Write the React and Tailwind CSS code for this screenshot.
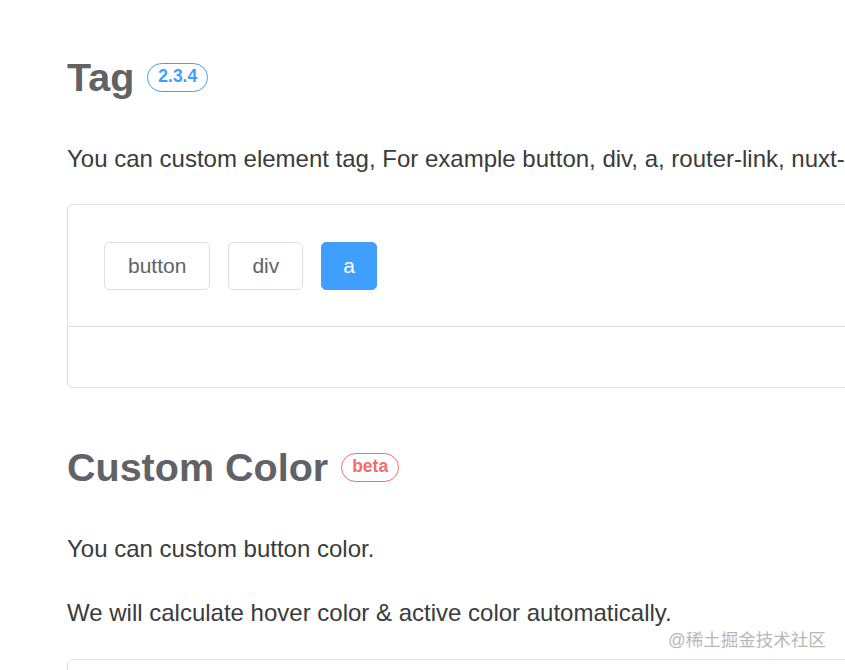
import React from "react";

const Badge = ({ children, tone }) => (
  <span
    className={`ml-[13px] inline-flex h-[29px] items-center rounded-full border px-[10px] text-[17.5px] font-bold leading-none ${
      tone === "red" ? "border-[#f56c6c] text-[#f56c6c]" : "border-[#409eff] text-[#409eff]"
    }`}
  >
    {children}
  </span>
);

const DemoButton = ({ children, primary }) => (
  <div
    className={`flex h-[48px] items-center rounded-[5px] border text-[21px] ${
      primary
        ? "border-[#409eff] bg-[#409eff] px-[21px] text-white"
        : "border-[#dcdfe6] bg-white px-[23px] text-[#606266]"
    }`}
  >
    {children}
  </div>
);

export default function App() {
  return (
    <div
      className="relative h-[670px] w-[845px] overflow-hidden bg-white"
      style={{ fontFamily: '"Liberation Sans", Arial, sans-serif' }}
    >
      <div className="w-[1200px] pl-[67px] pt-[53px] text-[#303133]">
        {/* Tag section */}
        <h2 className="flex items-center text-[39.5px] font-bold leading-[48px] text-[#606266]">
          Tag
          <Badge>2.3.4</Badge>
        </h2>
        <p className="mt-[40px] text-[24px] leading-[36px] text-[#3a3b3d]">
          You can custom element tag, For example button, div, a, router-link, nuxt-link.
        </p>

        <div className="mt-[27px] w-[1000px] rounded-[6px] border border-[#dcdfe6]">
          <div className="flex h-[122px] items-center gap-[18px] border-b border-[#dcdfe6] px-[36px]">
            <DemoButton>button</DemoButton>
            <DemoButton>div</DemoButton>
            <DemoButton primary>a</DemoButton>
          </div>
          <div className="h-[60px]" />
        </div>

        {/* Custom Color section */}
        <h2 className="mt-[55px] flex items-center text-[39.5px] font-bold leading-[48px] text-[#606266]">
          Custom Color
          <Badge tone="red">beta</Badge>
        </h2>
        <p className="mt-[40px] text-[24px] leading-[36px] text-[#3a3b3d]">
          You can custom button color.
        </p>
        <p className="mt-[28px] text-[24px] leading-[36px] text-[#3a3b3d]">
          We will calculate hover color &amp; active color automatically.
        </p>

        <div className="mt-[28px] h-[120px] w-[1000px] rounded-[6px] border border-[#dcdfe6]" />
      </div>

      {/* watermark */}
      <div
        className="absolute left-[668px] top-[628px] text-[17.5px] leading-[24px] text-[#b8b8b8]"
        style={{ fontFamily: '"Liberation Sans", "Noto Sans CJK SC", sans-serif' }}
      >
        @稀土掘金技术社区
      </div>
    </div>
  );
}
